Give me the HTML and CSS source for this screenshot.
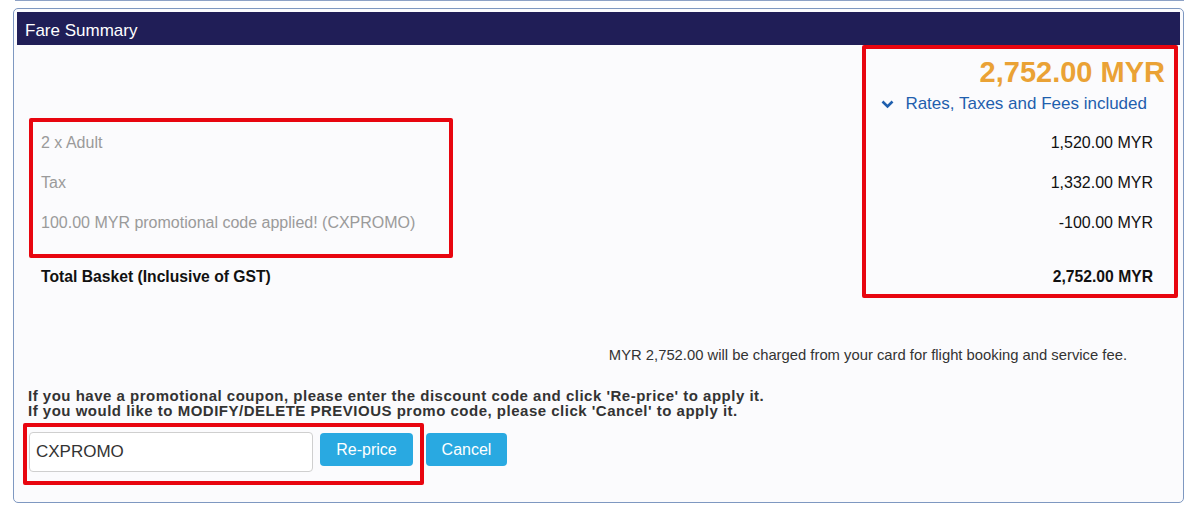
FILE: index.html
```html
<!DOCTYPE html>
<html lang="en">
<head>
    <meta charset="UTF-8">
    <meta name="viewport" content="width=device-width, initial-scale=1.0">
    <title>Fare Summary</title>

    <link rel="stylesheet" href="styles.css">
</head>
<body>

    <div class="page">
      <div class="prev-panel"></div>

      <div class="panel">
        <div class="panel-head">Fare Summary</div>

        <div class="panel-body">
          <div class="grand-total">2,752.00 MYR</div>
          <div class="rates">
            <svg class="chevron" width="13" height="9" viewBox="0 0 13 9">
              <polyline points="1.5,1.5 6.5,6.5 11.5,1.5" fill="none" stroke="#1f5fae" stroke-width="2.6"/>
            </svg>
            <span>Rates, Taxes and Fees included</span>
          </div>

          <div class="row">
            <span class="label">2 x Adult</span>
            <span class="amount">1,520.00 MYR</span>
          </div>
          <div class="row">
            <span class="label">Tax</span>
            <span class="amount">1,332.00 MYR</span>
          </div>
          <div class="row">
            <span class="label">100.00 MYR promotional code applied! (CXPROMO)</span>
            <span class="amount">-100.00 MYR</span>
          </div>
          <div class="row total">
            <span>Total Basket (Inclusive of GST)</span>
            <span class="amount">2,752.00 MYR</span>
          </div>

          <p class="charge-note">MYR 2,752.00 will be charged from your card for flight booking and service fee.</p>

          <p class="promo-help">
            If you have a promotional coupon, please enter the discount code and click 'Re-price' to apply it.<br>
            If you would like to MODIFY/DELETE PREVIOUS promo code, please click 'Cancel' to apply it.
          </p>

          <div class="promo-form">
            <input class="promo-input" type="text" value="CXPROMO">
            <button class="btn reprice">Re-price</button>
            <button class="btn cancel">Cancel</button>
          </div>
        </div>
      </div>

      <!-- annotation boxes drawn over the screenshot -->
      <div class="mark mark-labels"></div>
      <div class="mark mark-amounts"></div>
      <div class="mark mark-promo"></div>
    </div>

</body>
</html>
```

FILE: styles.css
```css
html, body {
    margin: 0;
    padding: 0;
    background: #fff;
    font-family: "Liberation Sans", Arial, Helvetica, sans-serif;
}

.page {
    position: relative;
    padding: 0 16px 0 13px;
    height: 509px;
    box-sizing: border-box;
}

.prev-panel {
    height: 1px;
    margin: 0 0 0 2px;
    background: #8ea2c6;
}

.panel {
    margin-top: 7px;
    border: 1px solid #7e98c1;
    border-radius: 5px;
    padding: 3px;
    background: #fbfbfd;
}

.panel-head {
    height: 33px;
    line-height: 33px;
    padding: 2px 0 0 8px;
    box-sizing: border-box;
    background: #201e57;
    color: #fff;
    font-size: 17px;
}

.panel-body {
    padding: 0 27px 27px 24px;
}

.grand-total {
    margin: 13px -12px 0 0;
    text-align: right;
    color: #eaa235;
    font-size: 29px;
    font-weight: bold;
    line-height: 28px;
}

.rates {
    display: flex;
    justify-content: flex-end;
    align-items: center;
    gap: 11px;
    margin-top: 8px;
    line-height: 20px;
    font-size: 17px;
    color: #1f5fae;
    padding-right: 6px;
}

.chevron {
    margin-top: 1px;
}

.row {
    display: flex;
    justify-content: space-between;
    align-items: center;
    height: 40px;
    font-size: 16px;
    color: #111;
}

.rates + .row {
    margin-top: 9px;
}

.label {
    color: #9a9a9a;
}

.row.total {
    margin-top: 14px;
    font-weight: bold;
    font-size: 15.7px;
}

.charge-note {
    margin: 48px 26px 0 0;
    text-align: right;
    font-size: 14.8px;
    line-height: 20px;
    color: #333;
}

.promo-help {
    margin: 23px 0 0 -13px;
    font-size: 15px;
    letter-spacing: 0.5px;
    font-weight: bold;
    line-height: 15px;
    color: #333;
}

.promo-form {
    display: flex;
    align-items: flex-start;
    margin: 14px 0 0 -12px;
}

.promo-input {
    width: 284px;
    height: 40px;
    box-sizing: border-box;
    border: 1px solid #cfcfcf;
    border-radius: 4px;
    padding: 0 6px;
    font-family: inherit;
    font-size: 17px;
    color: #333;
    background: #fff;
}

.btn {
    margin-top: 1px;
    height: 33px;
    border: 0;
    border-radius: 4px;
    background: #29a9e1;
    color: #fff;
    font-family: inherit;
    font-size: 16px;
    padding: 0;
}

.reprice {
    width: 93px;
    margin-left: 7px;
}

.cancel {
    width: 81px;
    margin-left: 13px;
}

.mark {
    position: absolute;
    border: 4px solid #e8050f;
    border-radius: 2px;
    box-sizing: border-box;
}

.mark-labels {
    left: 29px;
    top: 118px;
    width: 424px;
    height: 140px;
}

.mark-amounts {
    left: 862px;
    top: 45px;
    width: 316px;
    height: 253px;
}

.mark-promo {
    left: 23px;
    top: 423px;
    width: 401px;
    height: 62px;
}
```
